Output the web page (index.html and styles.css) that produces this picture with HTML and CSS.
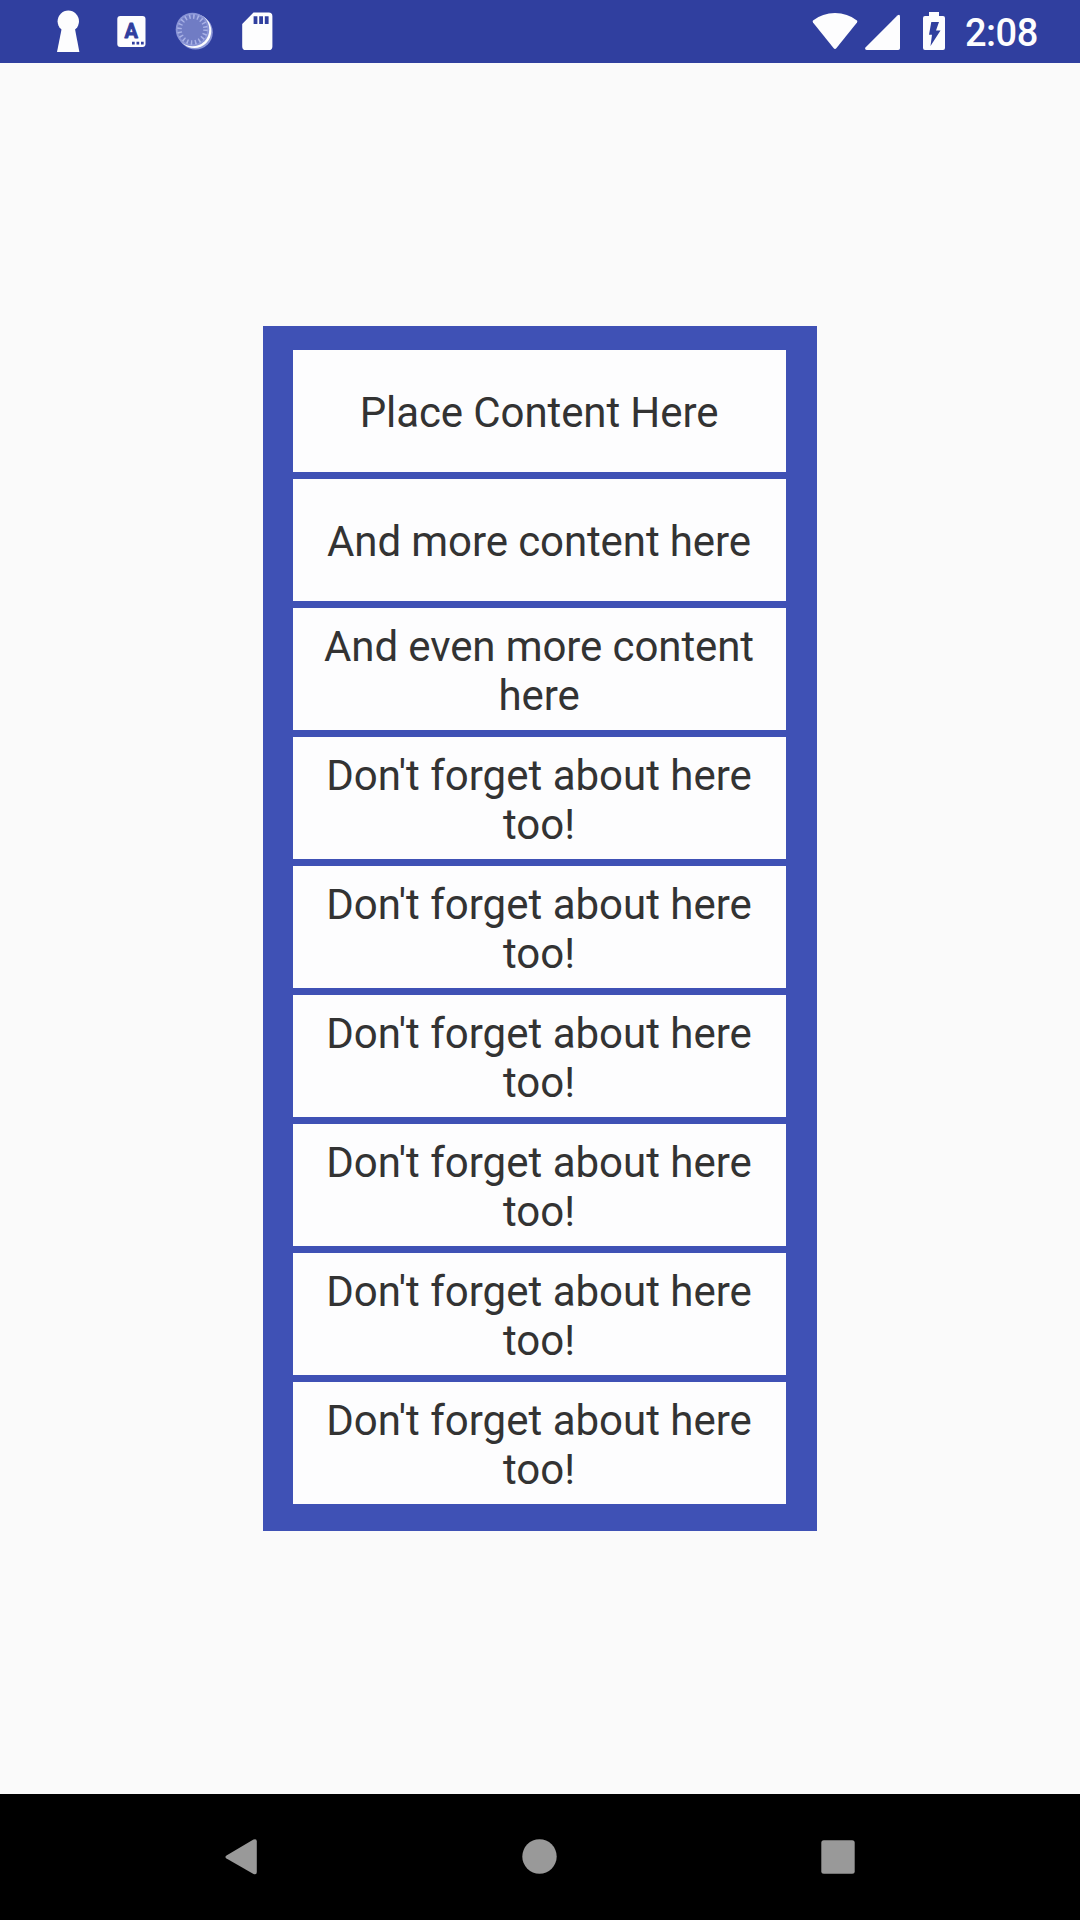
FILE: index.html
```html
<!DOCTYPE html>
<html lang="en">
<head>
<meta charset="utf-8">
<title>Content list</title>
<link rel="stylesheet" href="styles.css">
</head>
<body>
<div class="screen">
  <header class="status-bar">
    <div class="notifications">
      <svg class="icon keyhole" width="24" height="63" viewBox="56 0 24 63"><circle cx="68.3" cy="21.3" r="10.7"/><path d="M62 27h12.6l4.8 25H57z"/></svg>
      <svg class="icon" width="30" height="63" viewBox="117 0 30 63"><rect x="117.3" y="16" width="28.2" height="31" rx="3"/><text class="letter" x="131.3" y="38">A</text><path class="cut" d="M132 41.700h2.700v2.700H132zM136.500 41.700h2.700v2.700h-2.700zM141 41.700h2.700v2.700H141z"/></svg>
      <svg class="icon" width="40" height="63" viewBox="174 0 40 63"><circle class="coin-edge" cx="195.500" cy="32.300" r="17.300"/><circle cx="194.300" cy="31" r="17"/><circle class="coin-rim" cx="192.500" cy="29.500" r="16.800"/><circle class="coin" cx="192.500" cy="29.500" r="14.800"/><circle class="coin-ticks" cx="192.500" cy="29.500" r="13"/></svg>
      <svg class="icon" width="32" height="63" viewBox="241 0 32 63"><path d="M253.500 12.500h15.200a3.700 3.700 0 0 1 3.700 3.700v30.200a3.700 3.700 0 0 1-3.700 3.700h-22.800a3.700 3.700 0 0 1-3.700-3.700V24z"/><path class="cut" d="M253.600 16.300h3.800v7.800h-3.800zM259.200 16.300h3.800v7.800h-3.800zM264.800 16.300h3.800v7.800h-3.800z"/></svg>
    </div>
    <div class="system">
      <svg class="icon wifi" width="46" height="63" viewBox="812 0 46 63"><path d="M813 20.500Q822.500 13 835 13t22 7.500q.7.800 0 1.900L836.500 48q-1.500 1.800-3 0L813 22.400q-.7-1.100 0-1.900z"/></svg>
      <svg class="icon signal" width="36" height="63" viewBox="865 0 36 63"><path d="M897.400 15.500q2.600-2 2.600 1V48.200q0 1.800-1.800 1.800H866.700q-2.700-.3-1-2.800z"/></svg>
      <svg class="icon battery" width="22" height="63" viewBox="923 0 22 63"><path d="M929 12h10v4h4q2 0 2 2v30q0 2-2 2h-18q-2 0-2-2V18q0-2 2-2h4z"/><path class="cut" d="M931.300 22H939l-3 8.500h4.500L930.500 46l1.500-11.300h-3z"/></svg>
      <span class="clock">2:08</span>
    </div>
  </header>
  <main class="content">
    <div class="panel">
      <div class="cell snug">Place Content Here</div>
      <div class="cell snug">And more content here</div>
      <div class="cell snug">And even more content here</div>
      <div class="cell">Don't forget about here too!</div>
      <div class="cell">Don't forget about here too!</div>
      <div class="cell">Don't forget about here too!</div>
      <div class="cell">Don't forget about here too!</div>
      <div class="cell">Don't forget about here too!</div>
      <div class="cell">Don't forget about here too!</div>
    </div>
  </main>
  <nav class="nav-bar">
    <svg class="nav-icon" width="36" height="40" viewBox="223 1837 36 40"><path d="M253.500 1839.500q3.300-1.300 3.300 2v30.500q0 3.300-3.300 2l-27-15.500q-2.200-1.500 0-3z"/></svg>
    <svg class="nav-icon" width="36" height="40" viewBox="522 1837 36 40"><circle cx="539.500" cy="1856.500" r="17.200"/></svg>
    <svg class="nav-icon" width="36" height="40" viewBox="820 1837 36 40"><rect x="821.300" y="1840.300" width="33.400" height="33.400" rx="2.500"/></svg>
  </nav>
</div>
</body>
</html>
```

FILE: styles.css
```css
body {
  margin: 0;
  font-family: Roboto, "Noto Sans", sans-serif;
}

.screen {
  display: flex;
  flex-direction: column;
  width: 1080px;
  height: 1920px;
  background: #fafafa;
}

.status-bar {
  display: flex;
  justify-content: space-between;
  height: 63px;
  padding: 0 41px 0 56px;
  background: #303f9f;
}

.notifications {
  display: flex;
  gap: 27px;
}

.keyhole {
  margin-right: 10px;
}

.system {
  display: flex;
}

.icon {
  display: block;
  fill: #fdfdfe;
}

.wifi {
  margin-right: 7px;
}

.signal {
  margin-right: 22px;
}

.battery {
  margin-right: 20px;
}

.icon .cut {
  fill: #303f9f;
}

.letter {
  fill: #303f9f;
  stroke: #303f9f;
  stroke-width: 0.8px;
  stroke-linejoin: round;
  font-size: 20px;
  font-weight: 700;
  text-anchor: middle;
}

.icon .coin-edge {
  fill: #8d98d8;
}

.icon .coin-rim {
  fill: #8994d6;
}

.icon .coin {
  fill: #707cc4;
}

.icon .coin-ticks {
  fill: none;
  stroke: #a9b2e6;
  stroke-width: 4.5;
  stroke-dasharray: 1.5 2.6;
}

.clock {
  width: 74px;
  color: #fdfdfe;
  font-size: 38px;
  font-weight: 500;
  line-height: 67px;
  letter-spacing: -0.5px;
  white-space: nowrap;
}

.content {
  display: flex;
  flex: 1;
  align-items: flex-start;
  justify-content: center;
  padding-top: 263px;
}

.panel {
  display: grid;
  grid-auto-rows: 122px;
  gap: 7px;
  box-sizing: border-box;
  width: 554px;
  padding: 24px 31px 27px 30px;
  background: #3f51b5;
}

.cell {
  display: flex;
  align-items: center;
  justify-content: center;
  box-sizing: border-box;
  padding: 3px 25px 0 24px;
  background: #fdfdfe;
  color: #333333;
  font-size: 42px;
  line-height: 49px;
  text-align: center;
}

.snug {
  letter-spacing: -0.1px;
}

.nav-bar {
  display: flex;
  align-items: center;
  justify-content: space-between;
  height: 126px;
  padding: 0 224px 0 223px;
  background: #000000;
}

.nav-icon {
  display: block;
  fill: #999999;
}
```
